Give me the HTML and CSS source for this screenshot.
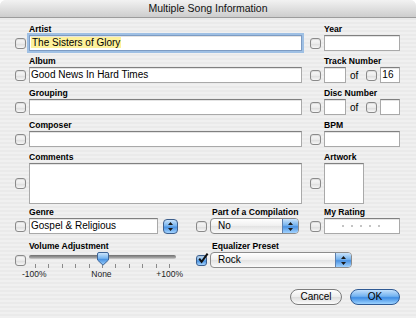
FILE: index.html
```html
<!DOCTYPE html>
<html lang="en">
<head>
    <meta charset="UTF-8">
    <title>Multiple Song Information</title>
    <link rel="stylesheet" href="styles.css">
</head>
<body>
<div class="window">
    <div class="titlebar">Multiple Song Information</div>
    <div class="content">
        <div class="row">
            <div class="field">
                <div class="label">Artist</div>
                <div class="line"><span class="check"></span><div class="input focus"><span class="sel">The Sisters of Glory</span></div></div>
            </div>
            <div class="field">
                <div class="label">Year</div>
                <div class="line"><span class="check"></span><div class="input"></div></div>
            </div>
        </div>
        <div class="row">
            <div class="field">
                <div class="label">Album</div>
                <div class="line"><span class="check"></span><div class="input">Good News In Hard Times</div></div>
            </div>
            <div class="field">
                <div class="label">Track Number</div>
                <div class="line"><span class="check"></span><div class="input small"></div><span class="of">of</span><span class="check"></span><div class="input">16</div></div>
            </div>
        </div>
        <div class="row">
            <div class="field">
                <div class="label">Grouping</div>
                <div class="line"><span class="check"></span><div class="input"></div></div>
            </div>
            <div class="field">
                <div class="label">Disc Number</div>
                <div class="line"><span class="check"></span><div class="input small"></div><span class="of">of</span><span class="check"></span><div class="input"></div></div>
            </div>
        </div>
        <div class="row">
            <div class="field">
                <div class="label">Composer</div>
                <div class="line"><span class="check"></span><div class="input"></div></div>
            </div>
            <div class="field">
                <div class="label">BPM</div>
                <div class="line"><span class="check"></span><div class="input"></div></div>
            </div>
        </div>
        <div class="row tall-row">
            <div class="field">
                <div class="label">Comments</div>
                <div class="line tall"><span class="check"></span><div class="input area"></div></div>
            </div>
            <div class="field">
                <div class="label">Artwork</div>
                <div class="line tall"><span class="check"></span><div class="input artwork"></div></div>
            </div>
        </div>

        <div class="row-flex">
            <div class="field genre">
                <div class="label">Genre</div>
                <div class="line">
                    <span class="check"></span><div class="input genre-input">Gospel &amp; Religious</div>
                    <span class="stepper">
                        <svg width="5" height="9" viewBox="0 0 5 9"><path d="M2.5 0L5 3H0z M2.5 9L0 6h5z" fill="#1a1a1a"/></svg>
                    </span>
                </div>
            </div>
            <div class="field compilation">
                <div class="label pop-label">Part of a Compilation</div>
                <div class="line">
                    <span class="check"></span>
                    <div class="popup"><span class="pop-text">No</span><span class="arrows"><svg width="5" height="9" viewBox="0 0 5 9"><path d="M2.5 0L5 3H0z M2.5 9L0 6h5z" fill="#1a1a1a"/></svg></span></div>
                </div>
            </div>
            <div class="field rating">
                <div class="label">My Rating</div>
                <div class="line"><span class="check"></span><div class="input stars"><i></i><i></i><i></i><i></i><i></i></div></div>
            </div>
        </div>

        <div class="row-flex last">
            <div class="field genre">
                <div class="label">Volume Adjustment</div>
                <div class="line slider-line">
                    <span class="check"></span>
                    <div class="slider">
                        <div class="track">
                            <span class="thumb">
                                <svg width="12" height="14" viewBox="0 0 12 14">
                                    <defs>
                                        <linearGradient id="tg" x1="0" y1="0" x2="0" y2="1">
                                            <stop offset="0" stop-color="#d2e8fc"/>
                                            <stop offset="0.45" stop-color="#79b6ef"/>
                                            <stop offset="0.55" stop-color="#4d95e2"/>
                                            <stop offset="1" stop-color="#9fd0fb"/>
                                        </linearGradient>
                                    </defs>
                                    <path d="M2 .5h8a1.5 1.5 0 0 1 1.5 1.5v6L6 13.2.5 8V2A1.5 1.5 0 0 1 2 .5z" fill="url(#tg)" stroke="#3f6596"/>
                                </svg>
                            </span>
                        </div>
                        <div class="ticks"><i></i><i></i><i></i><i></i><i></i><i></i><i></i><i></i><i></i><i></i><i></i></div>
                        <div class="scale"><span>-100%</span><span>None</span><span>+100%</span></div>
                    </div>
                </div>
            </div>
            <div class="field equalizer">
                <div class="label pop-label">Equalizer Preset</div>
                <div class="line">
                    <span class="check on">
                        <svg width="12" height="12" viewBox="0 0 12 12"><path d="M2.2 5.6l2.4 3.2L10.6 0.6" fill="none" stroke="#111" stroke-width="2"/></svg>
                    </span>
                    <div class="popup wide"><span class="pop-text">Rock</span><span class="arrows"><svg width="5" height="9" viewBox="0 0 5 9"><path d="M2.5 0L5 3H0z M2.5 9L0 6h5z" fill="#1a1a1a"/></svg></span></div>
                </div>
            </div>
        </div>

        <div class="buttons">
            <button class="btn">Cancel</button>
            <button class="btn ok">OK</button>
        </div>
    </div>
</div>
</body>
</html>
```

FILE: styles.css
```css
body {
    margin: 0;
    background: #fff;
    font-family: "Liberation Sans", Arial, sans-serif;
    color: #000;
}
.window {
    width: 416px;
    height: 318px;
    border-radius: 6px 6px 0 0;
    overflow: hidden;
    background: repeating-linear-gradient(to bottom, #f0f0f0 0, #f0f0f0 2px, #eaeaea 2px, #eaeaea 4px);
}
.titlebar {
    height: 17px;
    line-height: 17px;
    text-align: center;
    font-size: 10.5px;
    color: #111;
    background: linear-gradient(#f2f2f2, #dcdcdc 60%, #cdcdcd);
    border-bottom: 1px solid #9c9c9c;
}
.content {
    padding: 5px 0 0 15px;
}
.row {
    display: grid;
    grid-template-columns: 287px 90px;
    column-gap: 8px;
    margin-bottom: 4px;
}
.tall-row {
    margin-bottom: 2px;
}
.label {
    height: 12px;
    line-height: 12px;
    padding-left: 14px;
    font-size: 8.6px;
    font-weight: bold;
    white-space: nowrap;
}
.pop-label {
    padding-left: 16px;
}
.line {
    display: flex;
    align-items: center;
    gap: 3px;
    height: 16px;
}
.line.tall {
    height: 41px;
}
.check {
    flex: none;
    position: relative;
    width: 11px;
    height: 11px;
    box-sizing: border-box;
    border: 1px solid #8a8a8a;
    border-radius: 3px;
    background: linear-gradient(#fbfbfb, #e9e9e9 55%, #dedede 56%, #f6f6f6);
    box-shadow: inset 0 1px 1px rgba(0, 0, 0, 0.12);
}
.check.on {
    border-color: #3c5f8e;
    background: linear-gradient(#cde5fb, #78b4ee 45%, #4a92e1 55%, #a4d4ff);
}
.check.on svg {
    position: absolute;
    left: 0;
    top: -3px;
}
.input {
    flex: 1;
    min-width: 0;
    height: 16px;
    box-sizing: border-box;
    border: 1px solid #a9a9a9;
    border-top-color: #808080;
    background: #fff;
    box-shadow: inset 0 1px 0 #e4e4e4;
    font-size: 10px;
    line-height: 14px;
    padding: 0 1px;
    white-space: nowrap;
    overflow: hidden;
}
.input.focus {
    box-shadow: 0 0 0 2px #9fc0e4, inset 0 1px 0 #e4e4e4;
    border-color: #7d9bc2;
}
.sel {
    background: #fdf19b;
    padding: 0 1px;
}
.input.small {
    flex: none;
    width: 22px;
}
.of {
    font-size: 10px;
    margin: 0 5px 0 1px;
}
.input.area {
    height: 41px;
}
.input.artwork {
    flex: none;
    width: 40px;
    height: 41px;
}
.row-flex {
    display: flex;
    align-items: flex-start;
    margin-bottom: 6px;
}
.row-flex.last {
    margin-bottom: 0;
}
.genre {
    width: 163px;
}
.compilation {
    width: 103px;
    margin-left: 18px;
}
.rating {
    width: 90px;
    margin-left: 11px;
}
.equalizer {
    margin-left: 18px;
}
.genre-input {
    flex: none;
    width: 129px;
}
.stepper {
    flex: none;
    width: 15px;
    height: 15px;
    margin-left: 2px;
    box-sizing: border-box;
    border: 1px solid #3e5f8c;
    border-radius: 4px;
    background: linear-gradient(#c9e3fb, #76b3ee 45%, #4b92e1 55%, #a2d3ff);
    display: flex;
    align-items: center;
    justify-content: center;
}
.popup {
    display: flex;
    width: 89px;
    height: 16px;
    box-sizing: border-box;
    border: 1px solid #8c8c8c;
    border-radius: 4px;
    overflow: hidden;
    background: linear-gradient(#ffffff, #efefef 50%, #e2e2e2 51%, #fafafa);
    font-size: 10px;
    line-height: 14px;
}
.popup.wide {
    width: 142px;
}
.pop-text {
    flex: 1;
    padding-left: 7px;
}
.arrows {
    width: 15px;
    border-left: 1px solid #5c7fae;
    background: linear-gradient(#c9e3fb, #76b3ee 45%, #4b92e1 55%, #a2d3ff);
    display: flex;
    align-items: center;
    justify-content: center;
}
.stars {
    display: flex;
    align-items: center;
    gap: 7px;
    padding-left: 17px;
}
.stars i {
    width: 2px;
    height: 2px;
    background: #c4c4c4;
}
.slider-line {
    align-items: flex-start;
    height: auto;
}
.slider-line .check {
    margin-top: 3px;
}
.slider {
    width: 147px;
}
.track {
    position: relative;
    margin-top: 3px;
    height: 4px;
    border-radius: 2px;
    background: linear-gradient(#6f6f6f, #9d9d9d 60%, #cfcfcf);
}
.thumb {
    position: absolute;
    left: 68px;
    top: -3px;
    width: 12px;
    height: 14px;
}
.thumb svg {
    display: block;
}
.ticks {
    display: flex;
    justify-content: space-between;
    margin: 5px 6px 0;
    height: 4px;
}
.ticks i {
    width: 1px;
    background: #8a8a8a;
}
.scale {
    display: flex;
    justify-content: space-between;
    margin: 1px -7px 0;
    height: 10px;
    line-height: 10px;
    font-size: 8.5px;
    color: #222;
}
.buttons {
    display: flex;
    justify-content: flex-end;
    gap: 8px;
    margin-top: 10px;
    padding-right: 16px;
}
.btn {
    height: 16px;
    width: 52px;
    padding: 0;
    box-sizing: border-box;
    border: 1px solid #7c7c7c;
    border-radius: 8px;
    background: linear-gradient(#fefefe, #ececec 50%, #dcdcdc 51%, #fbfbfb);
    font-family: "Liberation Sans", Arial, sans-serif;
    font-size: 10px;
    line-height: 14px;
    color: #000;
}
.btn.ok {
    width: 50px;
    border-color: #2f5a94;
    background: linear-gradient(#c2e0fc, #72b2f0 45%, #3f8de3 55%, #9cd2ff);
}
```
